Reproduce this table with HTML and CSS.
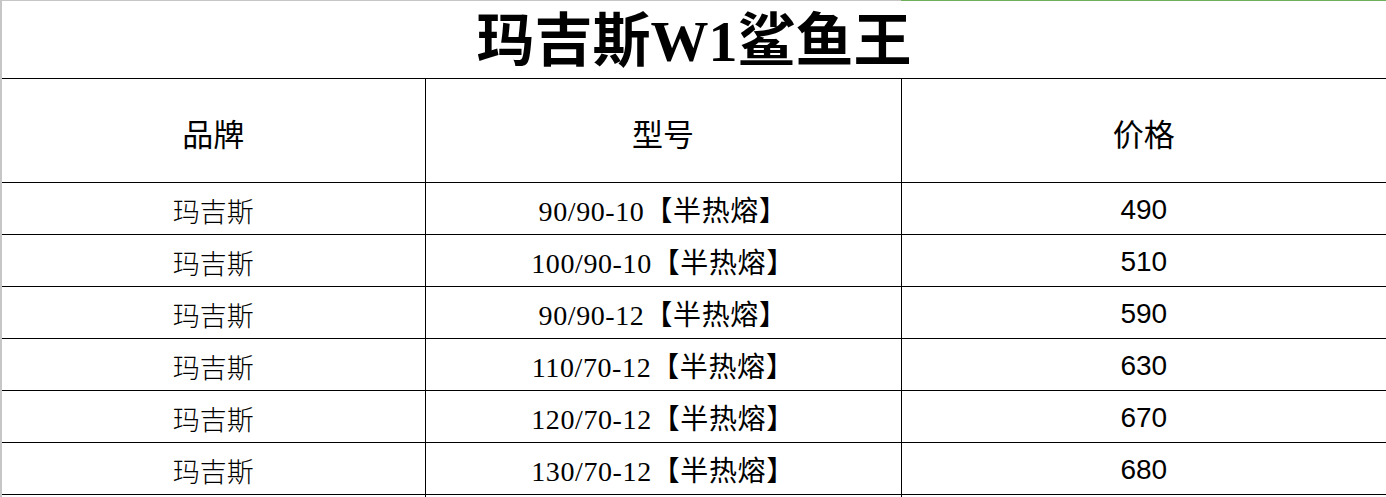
FILE: index.html
```html
<!DOCTYPE html>
<html lang="zh">
<head>
<meta charset="utf-8">
<title>玛吉斯W1鲨鱼王</title>
<link rel="stylesheet" href="styles.css">
</head>
<body>
<div class="sheet">
  <div class="topbar"><div class="seg-gray"></div><div class="seg-green"></div></div>
  <table class="price-table">
    <colgroup><col class="c1"><col class="c2"><col class="c3"></colgroup>
    <tr class="title-row"><td colspan="3" class="title">玛吉斯W1鲨鱼王</td></tr>
    <tr class="head-row"><td>品牌</td><td>型号</td><td>价格</td></tr>
    <tr class="row"><td class="brand">玛吉斯</td><td class="model">90/90-10【半热熔】</td><td class="price">490</td></tr>
    <tr class="row"><td class="brand">玛吉斯</td><td class="model">100/90-10【半热熔】</td><td class="price">510</td></tr>
    <tr class="row"><td class="brand">玛吉斯</td><td class="model">90/90-12【半热熔】</td><td class="price">590</td></tr>
    <tr class="row"><td class="brand">玛吉斯</td><td class="model">110/70-12【半热熔】</td><td class="price">630</td></tr>
    <tr class="row"><td class="brand">玛吉斯</td><td class="model">120/70-12【半热熔】</td><td class="price">670</td></tr>
    <tr class="row"><td class="brand">玛吉斯</td><td class="model">130/70-12【半热熔】</td><td class="price">680</td></tr>
    <tr class="row"><td class="brand"></td><td class="model"></td><td class="price"></td></tr>
  </table>
</div>
</body>
</html>
```
FILE: styles.css
```css
html, body {
  margin: 0;
  padding: 0;
  background: #ffffff;
  overflow: hidden;
}
body {
  width: 1386px;
  height: 497px;
  font-family: "Liberation Serif", "Noto Sans CJK SC", serif;
  color: #000;
}
.sheet {
  width: 1386px;
  height: 497px;
  overflow: hidden;
  border-left: 2px solid #c6c6c6;
  box-sizing: border-box;
}
.topbar {
  display: flex;
  height: 1px;
}
.seg-gray {
  width: 899px;
  background: #c6c6c6;
}
.seg-green {
  flex: 1;
  background: #6fae5a;
}
.price-table {
  border-collapse: collapse;
  table-layout: fixed;
  width: 1384px;
}
.c1 { width: 423px; }
.c2 { width: 476px; }
.c3 { width: 485px; }
.price-table td {
  padding: 0;
  box-sizing: border-box;
  text-align: center;
  vertical-align: middle;
  border-bottom: 1px solid #000;
  border-right: 1px solid #000;
}
.price-table td:last-child {
  border-right: none;
}
.title-row td {
  height: 77px;
  border-right: none;
}
.title {
  font-size: 58px;
  font-weight: 700;
  line-height: 70px;
  padding-top: 5px !important;
}
.head-row td {
  height: 104px;
  font-size: 31px;
  font-family: "Noto Sans CJK SC", sans-serif;
  font-weight: 400;
  padding-top: 4px;
}
.row td {
  height: 52px;
  font-size: 27px;
  padding-top: 4px;
}
.brand {
  font-family: "Noto Sans CJK SC", sans-serif;
  font-weight: 300;
}
.model {
  font-family: "Liberation Serif", "Noto Sans CJK SC", serif;
  font-size: 28px !important;
  letter-spacing: 0.6px;
  padding-top: 2px !important;
}
.price {
  font-family: "Liberation Sans", Arial, sans-serif;
  font-size: 28px !important;
}
```
